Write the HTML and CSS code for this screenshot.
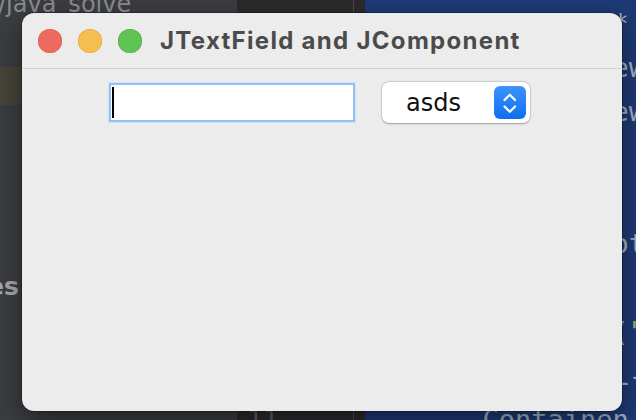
FILE: index.html
```html
<!DOCTYPE html>
<html>
<head>
<meta charset="utf-8">
<link rel="stylesheet" href="styles.css">
</head>
<body>
<div class="desktop">
  <div class="project">
    <div class="path">/java_solve</div>
    <div class="row-hl"></div>
    <div class="label">es</div>
  </div>
  <div class="gutter">
    <div class="ln"></div><div class="ln"></div><div class="ln"></div><div class="ln"></div><div class="ln"></div>
    <div class="ln"></div><div class="ln"></div><div class="ln"></div><div class="ln"></div><div class="ln">11</div>
  </div>
  <div class="sep"></div>
  <div class="editor">
    <div class="code">              *</div>
    <div class="code">              ew</div>
    <div class="code">              ew</div>
    <div class="code"> </div>
    <div class="code"> </div>
    <div class="code">              ot</div>
    <div class="code"> </div>
    <div class="code">              (<span class="str">"</span></div>
    <div class="code">              L-</div>
    <div class="code">      Containen</div>
  </div>

  <div class="window">
    <div class="titlebar">
      <div class="lights">
        <span class="light red"></span>
        <span class="light yellow"></span>
        <span class="light green"></span>
      </div>
      <div class="title">JTextField and JComponent</div>
    </div>
    <div class="content">
      <div class="row">
        <div class="field"><span class="caret"></span></div>
        <div class="combo">
          <span class="combo-text">asds</span>
          <span class="combo-btn">
            <svg width="32" height="33" viewBox="0 0 32 33">
              <path d="M10.5 14 L15.8 8.7 L21.1 14" fill="none" stroke="#fff" stroke-width="2.2" stroke-linecap="round" stroke-linejoin="round"/>
              <path d="M10.5 20.5 L15.8 25.8 L21.1 20.5" fill="none" stroke="#fff" stroke-width="2.2" stroke-linecap="round" stroke-linejoin="round"/>
            </svg>
          </span>
        </div>
      </div>
    </div>
  </div>
</div>
</body>
</html>
```

FILE: styles.css
```css
* { box-sizing: border-box; }
html, body { margin: 0; padding: 0; }
body { width: 636px; height: 420px; overflow: hidden; background: #1e3a75; }

.desktop {
  position: relative;
  width: 636px;
  height: 420px;
  display: flex;
  overflow: hidden;
}

.project {
  width: 237px;
  flex: none;
  background: #3b3d40;
  display: flex;
  flex-direction: column;
  font-family: "DejaVu Sans", sans-serif;
}
.path {
  height: 20px;
  margin-top: -8px;
  font-size: 24px;
  line-height: 24px;
  color: #8a8c8f;
  white-space: nowrap;
  margin-left: -2px;
}
.row-hl {
  margin-top: 55px;
  height: 38px;
  background: #47443a;
}
.label {
  margin-top: 169px;
  margin-left: -13px;
  font-size: 25px;
  line-height: 26px;
  color: #a6a8aa;
  font-weight: bold;
}

.gutter {
  width: 116px;
  flex: none;
  background: #2b2b2d;
  padding-top: 2px;
  padding-left: 10px;
  font-family: "DejaVu Sans Mono", monospace;
  font-size: 26px;
  line-height: 44px;
  color: #5d6064;
}
.ln { height: 44px; }

.sep {
  width: 12px;
  flex: none;
  background: #2b2b2d;
  border-left: 1px solid #4b4b4e;
}

.editor {
  flex: 1;
  background: #1e3a75;
  padding-top: 2px;
  padding-left: 20px;
  font-family: "DejaVu Sans Mono", monospace;
  font-size: 27px;
  line-height: 44px;
  color: #a9b3c4;
}
.code { height: 44px; white-space: pre; }
.str { color: #8fbf6a; }

.window {
  position: absolute;
  left: 22px;
  top: 13px;
  width: 600px;
  height: 398px;
  background: #ececec;
  border-radius: 12px;
  display: flex;
  flex-direction: column;
  box-shadow: 0 10px 28px rgba(0,0,0,0.45), 0 0 0 0.5px rgba(0,0,0,0.5);
}

.titlebar {
  height: 56px;
  flex: none;
  border-bottom: 1px solid #d3d3d3;
  display: flex;
  align-items: center;
  padding-left: 16px;
}
.lights { display: flex; gap: 16px; }
.light {
  width: 24px;
  height: 24px;
  border-radius: 50%;
  display: block;
}
.red { background: #ee6a5f; box-shadow: inset 0 0 0 0.5px #d35a4e; }
.yellow { background: #f5bf4f; box-shadow: inset 0 0 0 0.5px #d9a33b; }
.green { background: #5fc453; box-shadow: inset 0 0 0 0.5px #4aa93f; }

.title {
  margin-left: 18px;
  font-family: "Inter", "Liberation Sans", sans-serif;
  font-weight: 700;
  font-size: 24px;
  color: #4b4b4b;
  letter-spacing: 1.3px;
}

.content {
  flex: 1;
  padding-top: 13px;
}
.row {
  display: flex;
  justify-content: center;
  align-items: center;
  gap: 27px;
  padding-right: 5px;
}

.field {
  width: 246px;
  height: 39px;
  background: #fff;
  border: 2px solid #93c1f3;
  box-shadow: 0 0 0 1px #cde2f8;
  padding: 2px 1px;
  display: flex;
  align-items: center;
}
.caret {
  display: block;
  width: 2px;
  height: 31px;
  background: #000;
}

.combo {
  width: 148px;
  height: 41px;
  background: #fff;
  border-radius: 7px;
  box-shadow: 0 0.5px 2px rgba(0,0,0,0.3), 0 0 0 0.5px rgba(0,0,0,0.12);
  display: flex;
  align-items: center;
  padding-left: 24px;
  padding-right: 4px;
}
.combo-text {
  font-family: "DejaVu Sans", sans-serif;
  font-size: 24px;
  color: #111;
}
.combo-btn {
  margin-left: auto;
  width: 32px;
  height: 33px;
  border-radius: 6px;
  background: linear-gradient(#3d93fb, #0e6ff2);
  display: block;
}
.combo-btn svg { display: block; }
```
